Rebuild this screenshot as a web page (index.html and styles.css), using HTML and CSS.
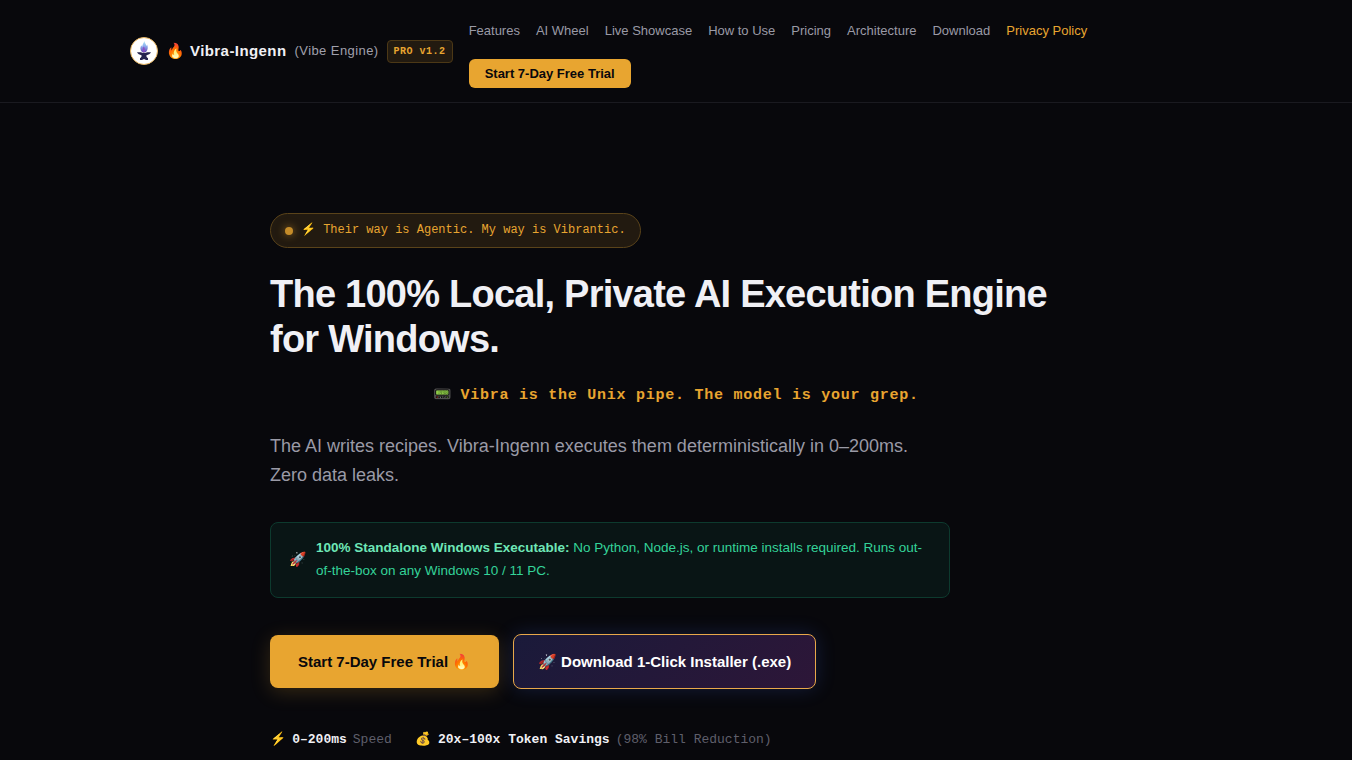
FILE: index.html
```html
<!DOCTYPE html>
<html lang="en">
<head>
<meta charset="utf-8">
<title>Vibra-Ingenn</title>
<link rel="stylesheet" href="styles.css">
</head>
<body>
<header class="header">
  <div class="header-inner">
    <a class="brand">
      <svg class="logo" viewBox="0 0 28 28">
        <defs>
          <linearGradient id="flame" x1="0" y1="0" x2="0" y2="1">
            <stop offset="0" stop-color="#a8eaf4"/>
            <stop offset=".45" stop-color="#8fb0f0"/>
            <stop offset="1" stop-color="#6550b8"/>
          </linearGradient>
        </defs>
        <circle cx="14" cy="14" r="13.5" fill="#fff" stroke="#e8b560"/>
        <path d="M14.200 4c.4 2 2 2.800 1.900 4.800.9-.3 1-1 .9-1.500 1.300 2.300 1 5.700-1 7.700h-4c-2.200-2-2-4.700-.5-6.700.1.900.4 1.300.8 1.500-.2-2.400 1.700-3.500 1.900-5.800z" fill="url(#flame)"/>
        <path d="M13.800 9.500c1.200 1.500 1.200 3.800.7 6h-1.400c-.6-2-.6-4.500.7-6z" fill="#8a50c8"/>
        <path d="M7 15.300h4l1 .5h4l1-.5h4c-.6 1.500-2.600 2.600-4.700 3.100 0 1.300.6 2 1.700 2.700v1.900h-2.200l-.9-.8h-1.800l-.9.800H10v-1.900c1.100-.7 1.700-1.400 1.700-2.700-2.100-.5-4.100-1.600-4.700-3.100z" fill="#25244f"/>
      </svg>
      <span class="brand-name">🔥 Vibra-Ingenn</span>
      <span class="brand-sub">(Vibe Engine)</span>
      <span class="version">PRO v1.2</span>
    </a>
    <nav class="nav">
      <a>Features</a><a>AI Wheel</a><a>Live Showcase</a><a>How to Use</a><a>Pricing</a><a>Architecture</a><a>Download</a><a class="active">Privacy Policy</a>
      <a class="nav-cta">Start 7-Day Free Trial</a>
    </nav>
  </div>
</header>
<main class="hero">
  <div class="pill"><span class="dot"></span><span><span class="emoji">⚡</span> Their way is Agentic. My way is Vibrantic.</span></div>
  <h1>The 100% Local, Private AI Execution Engine for Windows.</h1>
  <p class="tagline"><span class="emoji">📟</span> Vibra is the Unix pipe. The model is your grep.</p>
  <p class="lead">The AI writes recipes. Vibra-Ingenn executes them deterministically in 0–200ms. Zero data leaks.</p>
  <div class="notice">
    <span class="notice-icon">🚀</span>
    <p><strong>100% Standalone Windows Executable:</strong> No Python, Node.js, or runtime installs required. Runs out-of-the-box on any Windows 10 / 11 PC.</p>
  </div>
  <div class="actions">
    <a class="btn btn-primary">Start 7-Day Free Trial 🔥</a>
    <a class="btn btn-download"><span class="emoji">🚀</span> Download 1-Click Installer (.exe)</a>
  </div>
  <div class="stats">
    <div class="stat"><span class="emoji">⚡</span><strong>0–200ms</strong><span>Speed</span></div>
    <div class="stat"><span class="emoji">💰</span><strong>20x–100x Token Savings</strong><span>(98% Bill Reduction)</span></div>
  </div>
</main>
</body>
</html>
```
FILE: styles.css
```css
* { box-sizing: border-box; margin: 0; padding: 0; }
body {
  height: 760px;
  overflow: hidden;
  background: #08080c;
  color: #f0f0f5;
  font-family: "Liberation Sans", sans-serif;
}
.emoji { font-family: "Noto Color Emoji", sans-serif; line-height: 1; }
.header { height: 103px; border-bottom: 1px solid #1a1a20; }
.header-inner {
  display: flex;
  align-items: center;
  gap: 16px;
  width: 1092px;
  height: 102px;
  margin: 0 auto;
}
.brand { display: flex; align-items: center; gap: 8px; flex: none; letter-spacing: 0.426px; white-space: nowrap; }
.logo { width: 28px; height: 28px; }
.brand-name { font-size: 15px; font-weight: 700; }
.brand-sub { padding-bottom: 2px; font-size: 13px; color: #a0a0ac; }
.version {
  height: 23px;
  padding: 0 6px;
  border: 1px solid #4c3816;
  border-radius: 4px;
  background: #221a10;
  color: #e8a530;
  font: 700 10px/21px "Liberation Mono", monospace;
  letter-spacing: 0.5px;
}
.nav {
  display: flex;
  flex-wrap: wrap;
  gap: 14px 16px;
  padding-top: 2px;
  font-size: 13px;
  line-height: 29px;
  color: #9a9aa6;
}
.nav .active { color: #e8a530; }
.nav-cta {
  padding: 0 16px;
  border-radius: 6px;
  background: #e8a530;
  color: #08080c;
  font-weight: 700;
}
.hero { width: 812px; margin: 0 auto; padding-top: 110px; }
.pill {
  display: flex;
  align-items: center;
  gap: 8px;
  width: fit-content;
  height: 35px;
  padding: 0 14px;
  border: 1px solid #5a431a;
  border-radius: 18px;
  background: #221a10;
  color: #e8a530;
  font: 12px/33px "Liberation Mono", monospace;
}
.pill > span:last-child { height: 33px; }
.dot {
  width: 8px;
  height: 8px;
  border-radius: 50%;
  background: #c58c29;
  box-shadow: 0 0 8px rgba(232, 165, 48, 0.6);
}
h1 {
  margin-top: 24px;
  font-size: 38px;
  line-height: 45px;
  letter-spacing: -0.76px;
}
.tagline {
  height: 20px;
  margin-top: 24px;
  color: #e8a530;
  font: 700 15px/20px "Liberation Mono", monospace;
  letter-spacing: 0.75px;
  text-align: center;
}
.tagline .emoji { margin-right: -2px; }
.lead { width: 640px; margin-top: 26px; color: #9a9aa6; font-size: 18px; line-height: 29px; }
.notice {
  display: flex;
  align-items: center;
  gap: 10px;
  width: 680px;
  height: 76px;
  margin-top: 32px;
  padding: 0 18px 2px;
  border: 1px solid #0d3a2e;
  border-radius: 8px;
  background: #091515;
  color: #34d399;
  font-size: 13.5px;
  line-height: 23px;
}
.notice-icon { flex: none; font-size: 14px; }
.notice strong { color: #6ee7b7; }
.actions { display: flex; align-items: center; gap: 14px; margin-top: 36px; }
.btn { border-radius: 8px; font-size: 15px; font-weight: 700; white-space: nowrap; }
.btn-primary {
  padding: 0 28px;
  background: #e8a530;
  color: #08080c;
  line-height: 53px;
  box-shadow: 0 4px 20px rgba(232, 165, 48, 0.2);
}
.btn-download {
  height: 55px;
  padding: 0 24px;
  border: 1px solid #e8a84a;
  background: linear-gradient(135deg, #1a1a3a, #2d1638);
  color: #fff;
  line-height: 53px;
  box-shadow: 0 0 20px rgba(70, 110, 240, 0.2);
}
.stats { display: flex; gap: 24px; margin-top: 41px; font: 13px/20px "Liberation Mono", monospace; color: #5f5f6b; }
.stat { display: flex; gap: 6px; }
.stat .emoji { line-height: 18px; }
.stat strong { color: #f0f0f5; }
```
